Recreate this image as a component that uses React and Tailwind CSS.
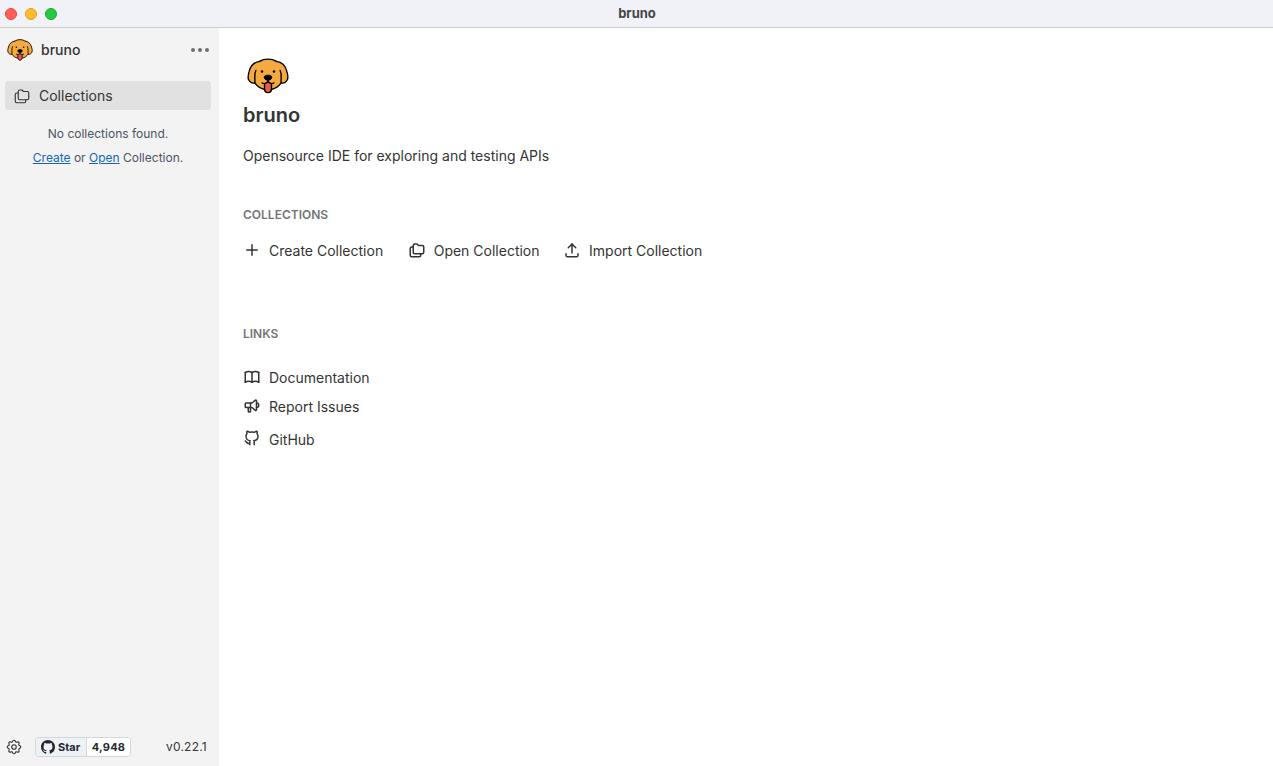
import React from 'react';

function Icon({ size = 18, stroke = 2, className = '', children }) {
  return (
    <svg
      width={size}
      height={size}
      viewBox="0 0 24 24"
      fill="none"
      stroke="currentColor"
      strokeWidth={stroke}
      strokeLinecap="round"
      strokeLinejoin="round"
      className={`shrink-0 ${className}`}
    >
      {children}
    </svg>
  );
}

const folders = (
  <>
    <path d="M9 4h3l2 2h5a2 2 0 0 1 2 2v7a2 2 0 0 1 -2 2h-10a2 2 0 0 1 -2 -2v-9a2 2 0 0 1 2 -2" />
    <path d="M17 17v2a2 2 0 0 1 -2 2h-10a2 2 0 0 1 -2 -2v-9a2 2 0 0 1 2 -2h2" />
  </>
);
const plus = <path d="M12 5v14M5 12h14" />;
const upload = (
  <>
    <path d="M4 17v2a2 2 0 0 0 2 2h12a2 2 0 0 0 2 -2v-2" />
    <path d="M7 9l5 -5l5 5" />
    <path d="M12 4v12" />
  </>
);
const book = (
  <>
    <path d="M3 19a9 9 0 0 1 9 0a9 9 0 0 1 9 0" />
    <path d="M3 6a9 9 0 0 1 9 0a9 9 0 0 1 9 0" />
    <path d="M3 6v13M12 6v13M21 6v13" />
  </>
);
const speaker = (
  <>
    <path d="M18 8a3 3 0 0 1 0 6" />
    <path d="M10 8v11a1 1 0 0 1 -1 1h-1a1 1 0 0 1 -1 -1v-5" />
    <path d="M12 8h0l4.524 -3.77a0.9 0.9 0 0 1 1.476 0.692v12.156a0.9 0.9 0 0 1 -1.476 0.692l-4.524 -3.77h-8a1 1 0 0 1 -1 -1v-4a1 1 0 0 1 1 -1h8" />
  </>
);
const github = (
  <path d="M9 19c-4.3 1.4 -4.3 -2.5 -6 -3m12 5v-3.5c0 -1 .1 -1.4 -.5 -2c2.8 -.3 5.5 -1.4 5.5 -6a4.6 4.6 0 0 0 -1.3 -3.2a4.2 4.2 0 0 0 -.1 -3.2s-1.1 -.3 -3.5 1.3a12.3 12.3 0 0 0 -6.2 0c-2.4 -1.6 -3.5 -1.3 -3.5 -1.3a4.2 4.2 0 0 0 -.1 3.2a4.6 4.6 0 0 0 -1.3 3.2c0 4.6 2.7 5.7 5.5 6c-.6 .6 -.6 1.2 -.5 2v3.5" />
);
const settings = (
  <>
    <path d="M10.325 4.317c.426 -1.756 2.924 -1.756 3.35 0a1.724 1.724 0 0 0 2.573 1.066c1.543 -.94 3.31 .826 2.37 2.37a1.724 1.724 0 0 0 1.065 2.572c1.756 .426 1.756 2.924 0 3.35a1.724 1.724 0 0 0 -1.066 2.573c.94 1.543 -.826 3.31 -2.37 2.37a1.724 1.724 0 0 0 -2.572 1.065c-.426 1.756 -2.924 1.756 -3.35 0a1.724 1.724 0 0 0 -2.573 -1.066c-1.543 .94 -3.31 -.826 -2.37 -2.37a1.724 1.724 0 0 0 -1.065 -2.572c-1.756 -.426 -1.756 -2.924 0 -3.35a1.724 1.724 0 0 0 1.066 -2.573c-.94 -1.543 .826 -3.31 2.37 -2.37c1 .608 2.296 .07 2.572 -1.065z" />
    <circle cx="12" cy="12" r="3" />
  </>
);

function Dog({ size, viewBox = '0 0 72 72' }) {
  return (
    <svg width={size} height={size} viewBox={viewBox} className="shrink-0">
      <path
        fill="#f4aa41"
        d="M24 15 C16 16 11 21 9 29 C7.500 34 6.500 38 8 41 C10 45 13 47 17 46 C20 50 24 54 30 55 H42 C48 54 52 50 55 46 C59 47 62 45 64 41 C65.500 38 64.500 34 63 29 C61 21 56 16 48 15 C42 10.500 30 10.500 24 15Z"
      />
      <path fill="#ea5a47" d="M31 46 C34 44.500 38 44.500 41 46 V54 C41 62 31 62 31 54Z" />
      <g fill="none" stroke="#000" strokeWidth="2" strokeLinecap="round" strokeLinejoin="round">
        <path d="M24 15 C16 16 11 21 9 29 C7.500 34 6.500 38 8 41 C10 45 13 47 17 46 C17.800 40 15.500 34 18.500 28" />
        <path d="M48 15 C56 16 61 21 63 29 C64.500 34 65.500 38 64 41 C62 45 59 47 55 46 C54.200 40 56.500 34 53.500 28" />
        <path d="M24 15 C30 10.500 42 10.500 48 15" />
        <path d="M17 46 C20 50 24 54 30 55" />
        <path d="M55 46 C52 50 48 54 42 55" />
        <path d="M36 42 V44 M27.500 46 C30 47.500 34 46.500 36 44 C38 46.500 42 47.500 44.500 46" />
        <path d="M31 47 V54 C31 62 41 62 41 54 V47" />
      </g>
      <path d="M30.500 37.500 C30.500 34 41.500 34 41.500 37.500 C41.500 40 39.500 42 36 42 C32.500 42 30.500 40 30.500 37.500Z" stroke="#000" strokeWidth="1.4" />
      <circle cx="27.400" cy="29.500" r="1.8" />
      <circle cx="44.600" cy="29.500" r="1.8" />
    </svg>
  );
}

function Octocat() {
  return (
    <svg width="14" height="14" viewBox="0 0 16 16" fill="#24292f" className="shrink-0">
      <path d="M8 0C3.58 0 0 3.58 0 8c0 3.54 2.29 6.53 5.47 7.59.4.07.55-.17.55-.38 0-.19-.01-.82-.01-1.49-2.01.37-2.53-.49-2.69-.94-.09-.23-.48-.94-.82-1.13-.28-.15-.68-.52-.01-.53.63-.01 1.08.58 1.23.82.72 1.21 1.87.87 2.33.66.07-.52.28-.87.51-1.07-1.78-.2-3.64-.89-3.64-3.95 0-.87.31-1.59.82-2.15-.08-.2-.36-1.02.08-2.12 0 0 .67-.21 2.2.82.64-.18 1.32-.27 2-.27s1.36.09 2 .27c1.53-1.04 2.2-.82 2.2-.82.44 1.1.16 1.92.08 2.12.51.56.82 1.27.82 2.15 0 3.07-1.87 3.75-3.65 3.95.29.25.54.73.54 1.48 0 1.07-.01 1.93-.01 2.2 0 .21.15.46.55.38A8.01 8.01 0 0 0 16 8c0-4.42-3.58-8-8-8z" />
    </svg>
  );
}

function Action({ icon, label, iconClass = 'mb-0.5' }) {
  return (
    <button className="flex h-5 items-center">
      <Icon className={iconClass}>{icon}</Icon>
      <span className="ml-2">{label}</span>
    </button>
  );
}

function TitleBar() {
  return (
    <header className="grid h-7 shrink-0 grid-cols-3 items-center border-b border-[#cfcfd1] bg-[#f0f2f7]">
      <div className="flex gap-2 pl-[5px]">
        <span className="size-3 rounded-full border border-[#e2463f] bg-[#ff5f57]" />
        <span className="size-3 rounded-full border border-[#e1a116] bg-[#febc2e]" />
        <span className="size-3 rounded-full border border-[#12ac28] bg-[#28c840]" />
      </div>
      <h1 className="-mt-px pl-px text-center text-[13px] font-bold leading-5 text-[#454547]">bruno</h1>
    </header>
  );
}

function Sidebar() {
  return (
    <aside className="flex w-[219px] shrink-0 flex-col bg-[#f3f3f3]">
      <div className="flex h-11 items-center pl-[7px] pr-2.5">
        <Dog size={26} viewBox="5.5 5.5 61 61" />
        <span className="ml-2 text-sm font-medium">bruno</span>
        <div className="ml-auto flex gap-[3px]">
          <span className="size-1 rounded-full bg-[#6e6e6e]" />
          <span className="size-1 rounded-full bg-[#6e6e6e]" />
          <span className="size-1 rounded-full bg-[#6e6e6e]" />
        </div>
      </div>
      <div className="ml-[5px] mr-2 mt-[9px] flex h-[29px] items-center rounded bg-[#e1e1e1] pl-2 text-sm">
        <Icon stroke={1.5}>{folders}</Icon>
        <span className="ml-2">Collections</span>
      </div>
      <div className="mt-3 pr-[3px] text-center text-xs leading-6 text-[#4b5563]">
        <p>No collections found.</p>
        <p>
          <a className="text-[#1663bb] underline">Create</a> or <a className="text-[#1663bb] underline">Open</a> Collection.
        </p>
      </div>
      <footer className="mt-auto flex h-[38px] items-center pl-[5px] pr-3">
        <Icon stroke={1.5}>{settings}</Icon>
        <div className="ml-3 flex h-5 w-24 overflow-hidden rounded-sm border border-[#d0d7de] text-[11px] font-bold leading-[18px] text-[#24292f]">
          <span className="flex w-[51px] items-center gap-[3px] border-r border-[#d0d7de] bg-[#eff2f5] pl-[5px]">
            <Octocat />
            Star
          </span>
          <span className="flex-1 bg-white text-center tracking-[0.02em]">4,948</span>
        </div>
        <span className="ml-auto text-xs tracking-[0.02em]">v0.22.1</span>
      </footer>
    </aside>
  );
}

export default function App() {
  return (
    <div className="flex h-screen flex-col overflow-hidden bg-white font-['Inter',sans-serif] text-[#343434]">
      <TitleBar />
      <div className="flex min-h-0 flex-1">
        <Sidebar />
        <main className="flex-1 pl-6 pt-[23px] text-sm">
          <Dog size={50} />
          <h2 className="text-xl font-semibold leading-7">bruno</h2>
          <p className="mt-[17px] leading-5">Opensource IDE for exploring and testing APIs</p>
          <h3 className="mt-[41px] text-xs font-semibold leading-4 text-[#757575]">COLLECTIONS</h3>
          <div className="mt-[18px] flex h-5 items-center gap-6">
            <Action icon={plus} label="Create Collection" />
            <div className="ml-[0.5px] flex gap-[23.5px]">
              <Action icon={folders} label="Open Collection" />
              <Action icon={upload} label="Import Collection" />
            </div>
          </div>
          <h3 className="mt-[65px] text-xs font-semibold leading-4 text-[#757575]">LINKS</h3>
          <div className="mt-[26px] flex flex-col items-start">
            <Action icon={book} label="Documentation" />
            <div className="mt-[9px]">
              <Action icon={speaker} label="Report Issues" />
            </div>
            <div className="mt-[13px]">
              <Action icon={github} label="GitHub" iconClass="mb-1" />
            </div>
          </div>
        </main>
      </div>
    </div>
  );
}
